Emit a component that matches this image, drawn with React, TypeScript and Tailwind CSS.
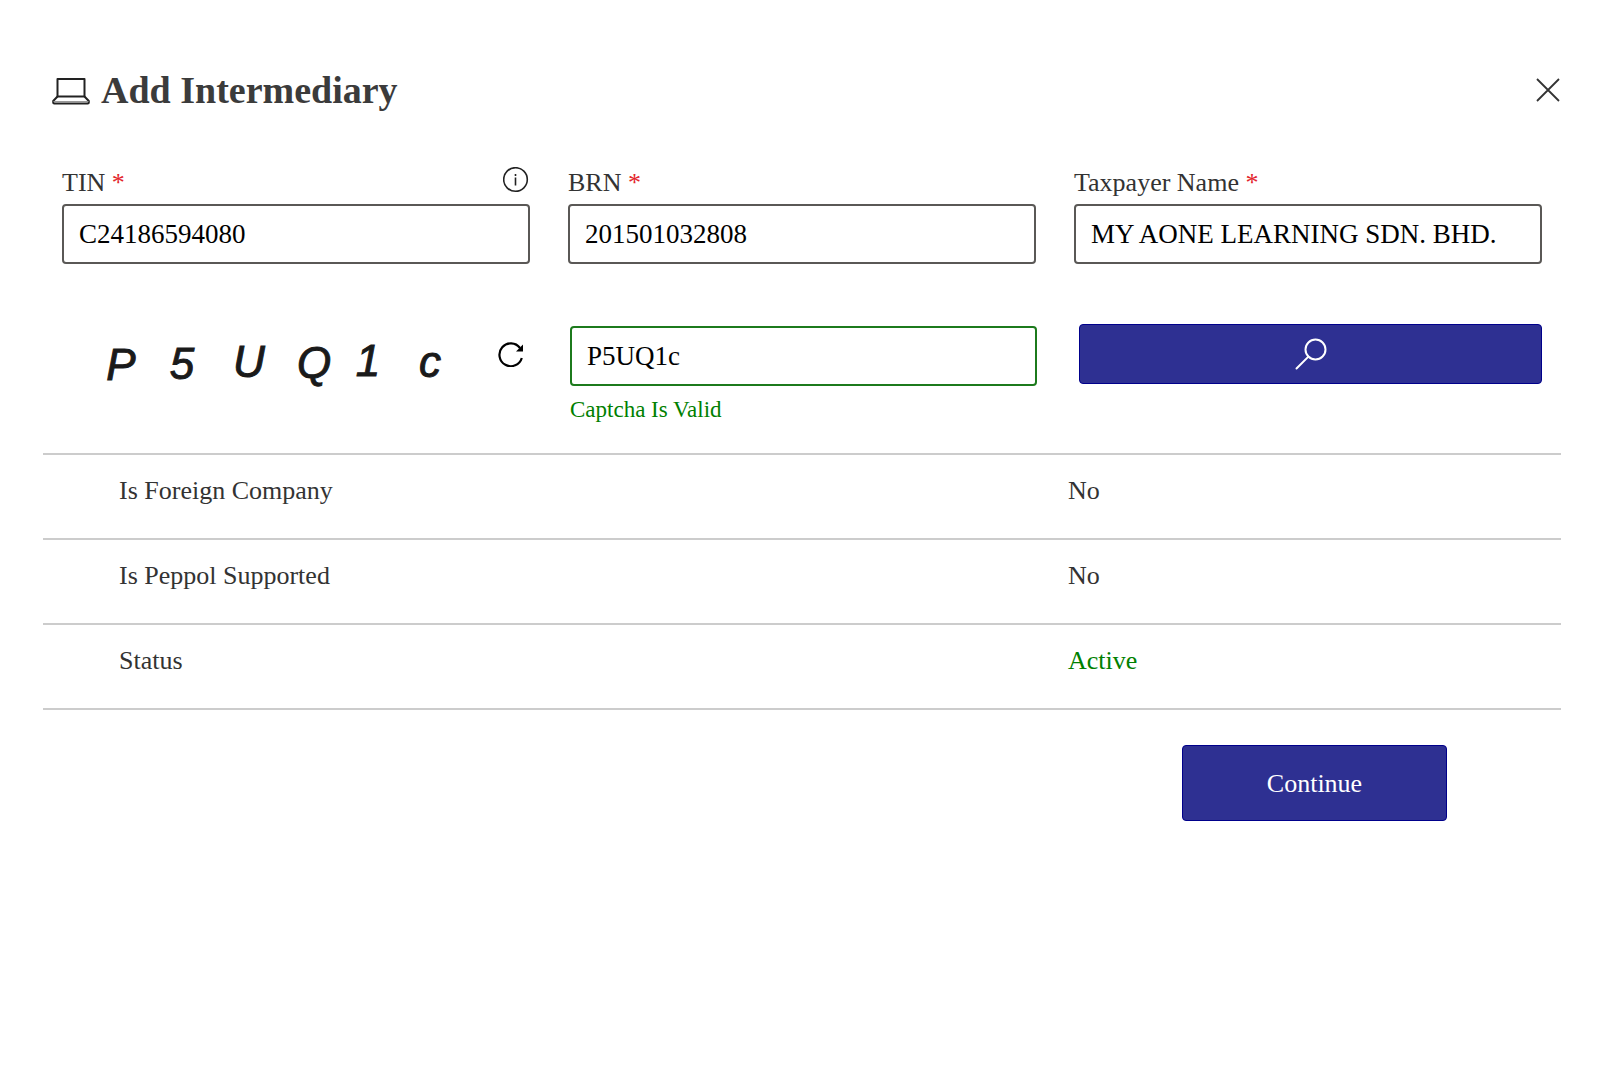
import React, { useState } from 'react';

interface FieldProps {
  id: string;
  label: string;
  value: string;
  onChange: (value: string) => void;
  info?: boolean;
}

interface Detail {
  label: string;
  value: string;
  active?: boolean;
}

const details: Detail[] = [
  { label: 'Is Foreign Company', value: 'No' },
  { label: 'Is Peppol Supported', value: 'No' },
  { label: 'Status', value: 'Active', active: true },
];

const captchaGlyphs = [
  { char: 'P', x: 28, y: 48 },
  { char: '5', x: 89, y: 47 },
  { char: 'U', x: 156, y: 45 },
  { char: 'Q', x: 221, y: 46 },
  { char: '1', x: 275, y: 44 },
  { char: 'c', x: 337, y: 45 },
];

const LaptopIcon = () => (
  <svg width="38" height="30" viewBox="0 0 38 30" fill="none" stroke="#222" strokeWidth="2" strokeLinejoin="round" aria-hidden="true">
    <path d="M5.5 4h27v17.5h-27z" />
    <path d="M5.5 21.5L1.2 26V27.4q0 1 1 1h33.6q1 0 1-1V26L32.5 21.5" />
    <path d="M1.5 26.5h35" stroke="#999" strokeWidth="1" />
  </svg>
);

const CloseIcon = () => (
  <svg width="24" height="24" viewBox="0 0 24 24" fill="none" stroke="#333" strokeWidth="1.8" aria-hidden="true">
    <path d="M1 1l22 22M23 1L1 23" />
  </svg>
);

const InfoIcon = () => (
  <svg width="26" height="26" viewBox="0 0 26 26" fill="none" stroke="#222" strokeWidth="1.6" aria-hidden="true">
    <circle cx="12.5" cy="12.5" r="11.8" />
    <path d="M12.5 10.5v8M12.5 7v2" />
  </svg>
);

const RefreshIcon = () => (
  <svg width="26" height="26" viewBox="0 0 26 26" fill="none" stroke="#000" strokeWidth="2.2" aria-hidden="true">
    <path d="M23.8 17A11.4 11.4 0 1 1 22 7" />
    <path d="M25 3.6v7h-7z" fill="#000" stroke="none" />
  </svg>
);

const SearchIcon = () => (
  <svg width="32" height="32" viewBox="0 0 32 32" fill="none" stroke="#fff" strokeWidth="2" strokeLinecap="round" aria-hidden="true">
    <circle cx="20.5" cy="11.5" r="10" />
    <path d="M13.4 18.6L1.5 30.5" />
  </svg>
);

const Field: React.FC<FieldProps> = ({ id, label, value, onChange, info }) => (
  <div className="px-[19px]">
    <div className="flex h-10 items-start justify-between">
      <label htmlFor={id} className="text-[26px] leading-[38px] text-[#333]">
        {label} <span className="text-[#e3242b]">*</span>
      </label>
      {info && (
        <button type="button" aria-label="TIN information" className="pt-[3px] pr-px">
          <InfoIcon />
        </button>
      )}
    </div>
    <input
      id={id}
      type="text"
      value={value}
      onChange={(e) => onChange(e.target.value)}
      className="block h-[60px] w-full rounded border-2 border-[#5a5856] px-[15px] text-[27px] text-black"
    />
  </div>
);

const App: React.FC = () => {
  const [tin, setTin] = useState('C24186594080');
  const [brn, setBrn] = useState('201501032808');
  const [name, setName] = useState('MY AONE LEARNING SDN. BHD.');
  const [captcha, setCaptcha] = useState('P5UQ1c');

  return (
    <main className="min-h-screen bg-white pt-16 pr-[39px] pb-16 pl-[43px] font-['Liberation_Serif',serif] text-[#333]">
      <header className="flex h-[52px] items-center justify-between pr-px pl-[9px]">
        <h1 className="flex items-center gap-[11px] text-[38px] leading-[52px] font-bold text-[#3b3b3b]">
          <LaptopIcon />
          Add Intermediary
        </h1>
        <button type="button" aria-label="Close">
          <CloseIcon />
        </button>
      </header>

      <form onSubmit={(e) => e.preventDefault()}>
        <div className="mt-12 grid grid-cols-3">
          <Field id="tin" label="TIN" value={tin} onChange={setTin} info />
          <Field id="brn" label="BRN" value={brn} onChange={setBrn} />
          <Field id="name" label="Taxpayer Name" value={name} onChange={setName} />
        </div>

        <div className="mt-[60px] grid grid-cols-3">
          <div className="flex items-start justify-between pr-[25px] pl-[50px]">
            <svg width="370" height="64" viewBox="0 0 370 64" role="img" aria-label="Captcha" className="mt-2">
              {captchaGlyphs.map((glyph) => (
                <text
                  key={glyph.char}
                  x={glyph.x}
                  y={glyph.y}
                  textAnchor="middle"
                  className="fill-[#1a1a1a] stroke-[#1a1a1a] stroke-1 font-['Liberation_Sans',sans-serif] text-[44px] italic"
                >
                  {glyph.char}
                </text>
              ))}
            </svg>
            <button type="button" aria-label="Refresh captcha" className="mt-[17px]">
              <RefreshIcon />
            </button>
          </div>
          <div className="pt-0.5 pr-[18px] pl-[21px]">
            <input
              type="text"
              aria-label="Captcha"
              value={captcha}
              onChange={(e) => setCaptcha(e.target.value)}
              className="block h-[60px] w-full rounded border-2 border-[#1c7a1c] px-[15px] text-[27px] text-black"
            />
            <p className="mt-2 text-[23px] leading-8 text-[#008000]">Captcha Is Valid</p>
          </div>
          <div className="pr-[19px] pl-6">
            <button
              type="submit"
              aria-label="Search"
              className="flex h-[60px] w-full items-center justify-center rounded border border-[#00008b] bg-[#2e3092]"
            >
              <SearchIcon />
            </button>
          </div>
        </div>

        <table className="mt-[27px] w-full table-fixed border-collapse border-t-2 border-[#ccc] text-left text-[26px] leading-8">
          <tbody>
            {details.map((detail) => (
              <tr key={detail.label} className="h-[85px] border-b-2 border-[#ccc] align-top">
                <th scope="row" className="w-2/3 pt-5 pl-[76px] font-normal">
                  {detail.label}
                </th>
                <td className={detail.active ? 'pt-5 pl-[13px] text-[#008000]' : 'pt-5 pl-[13px]'}>
                  {detail.value}
                </td>
              </tr>
            ))}
          </tbody>
        </table>

        <div className="mt-[35px] flex justify-end pr-[114px]">
          <button
            type="submit"
            className="h-[76px] w-[265px] rounded border border-[#00008b] bg-[#2e3092] text-[26px] text-white"
          >
            Continue
          </button>
        </div>
      </form>
    </main>
  );
};

export default App;
